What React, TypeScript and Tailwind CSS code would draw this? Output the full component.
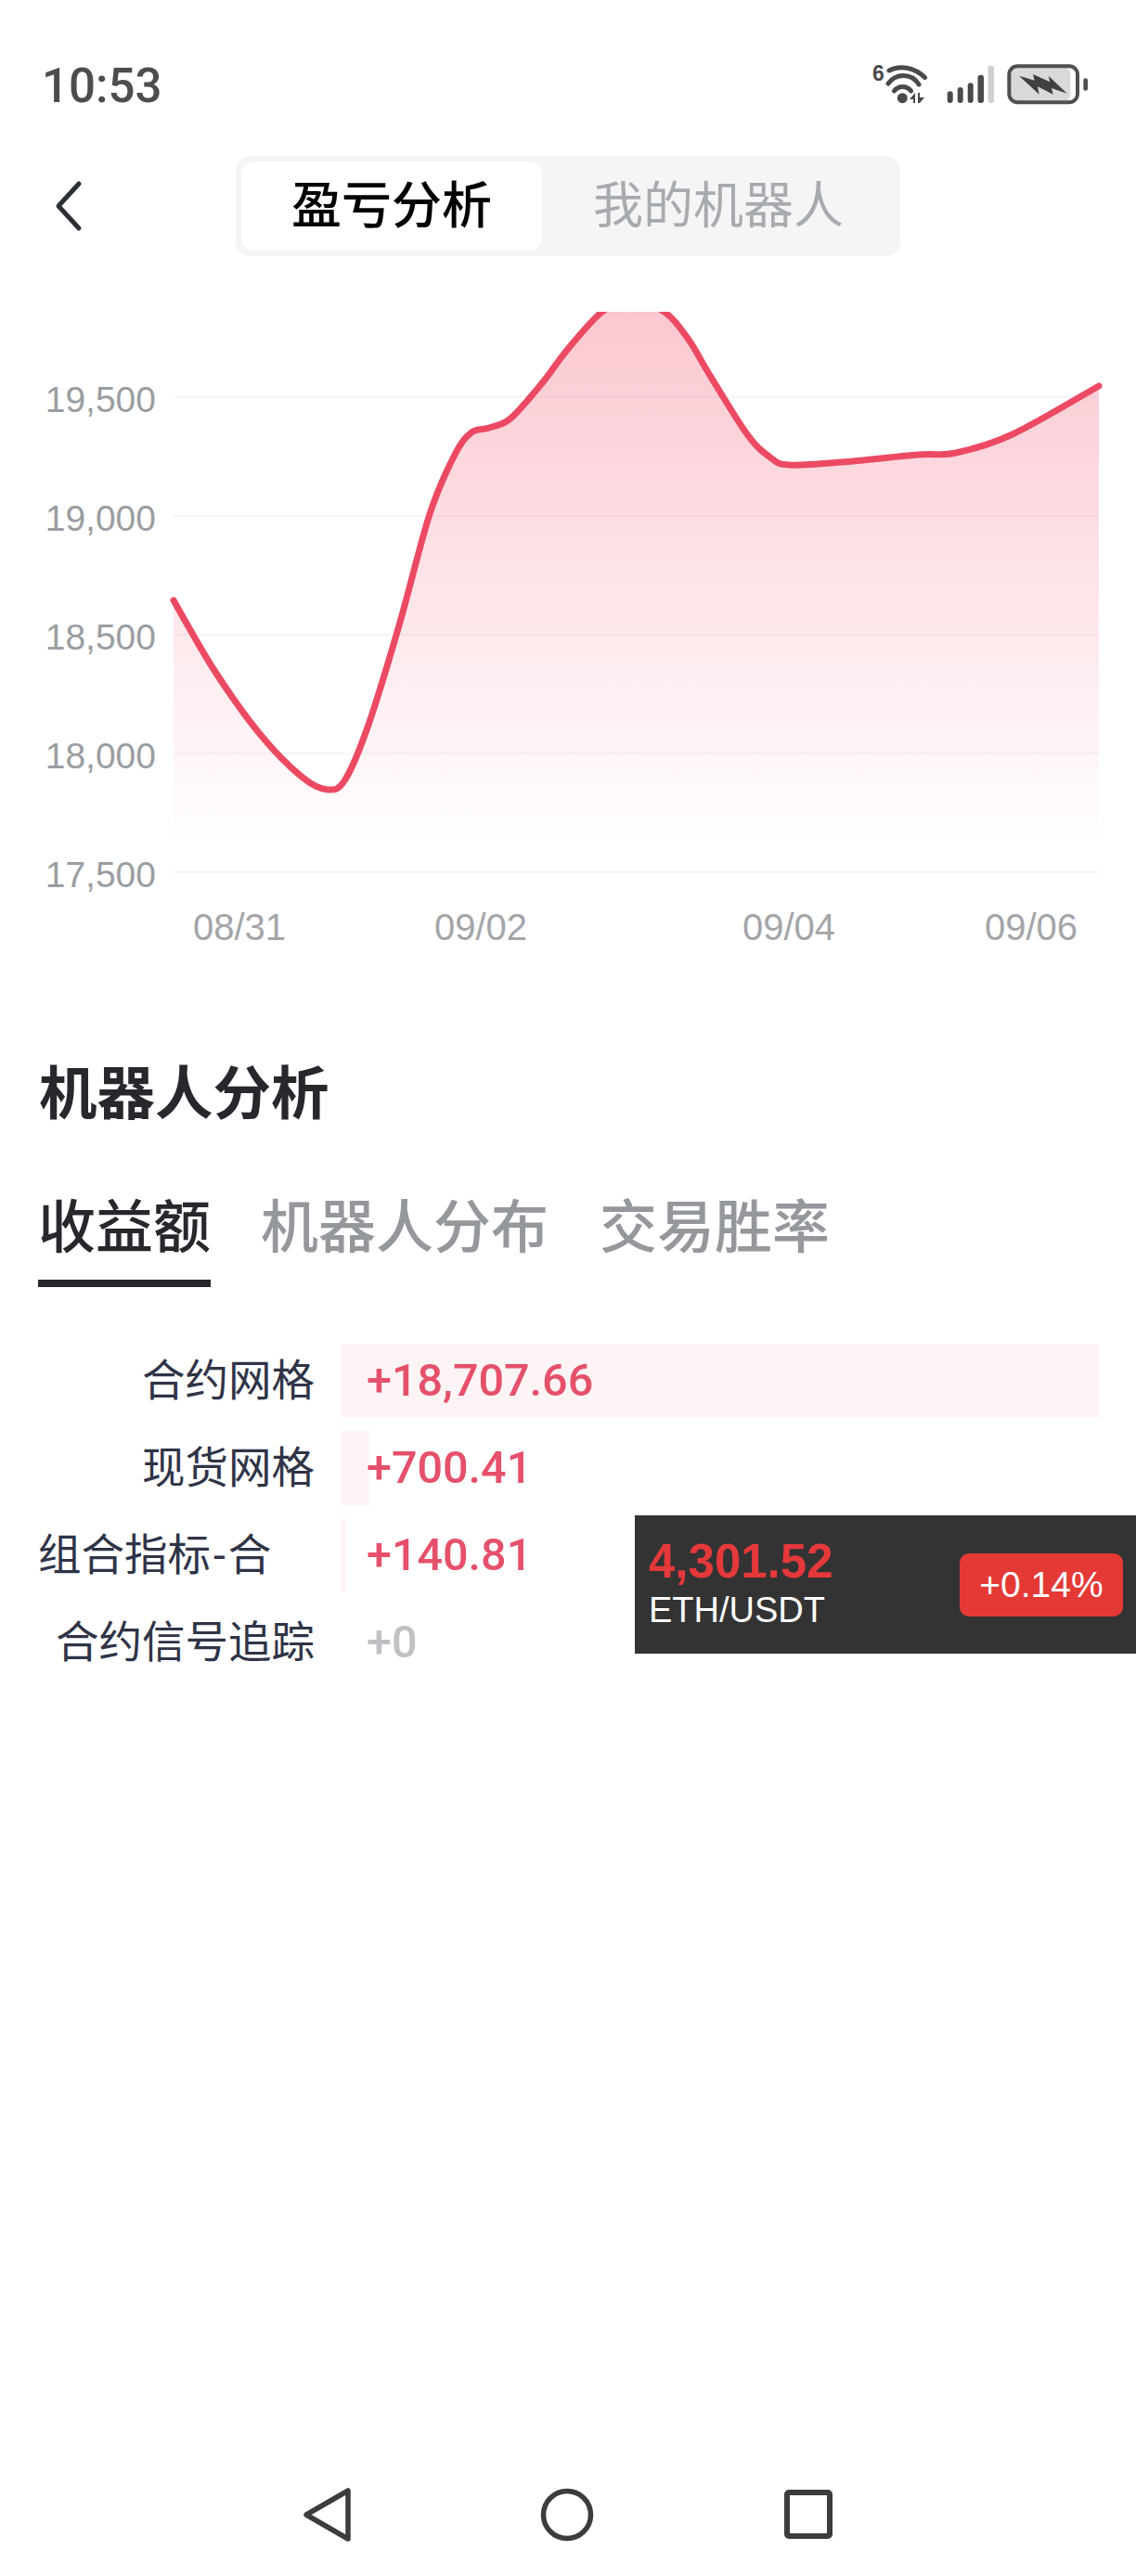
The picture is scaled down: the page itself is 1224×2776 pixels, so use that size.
import type { ReactNode } from "react";

const latin = "font-['Roboto','Noto_Sans_CJK_SC',sans-serif]";

const curve: [number, number][] = [
  [187, 647], [230, 721], [280, 791], [325, 837], [353, 851], [372, 840], [397, 781],
  [430, 674], [463, 554], [490, 490], [508, 466], [527, 461], [550, 451], [584, 413],
  [612, 376], [650, 335], [682, 324], [717, 337], [742, 366], [764, 403], [805, 468], [830, 493], [850, 501],
  [907, 498], [989, 490], [1030, 488], [1091, 468], [1184, 416],
];

// catmull-rom through the samples so the line stays smooth
function smoothPath(pts: [number, number][]) {
  let d = `M${pts[0][0]} ${pts[0][1]}`;
  for (let i = 0; i < pts.length - 1; i++) {
    const p0 = pts[Math.max(i - 1, 0)];
    const p1 = pts[i];
    const p2 = pts[i + 1];
    const p3 = pts[Math.min(i + 2, pts.length - 1)];
    const c1x = p1[0] + (p2[0] - p0[0]) / 6;
    const c1y = p1[1] + (p2[1] - p0[1]) / 6;
    const c2x = p2[0] - (p3[0] - p1[0]) / 6;
    const c2y = p2[1] - (p3[1] - p1[1]) / 6;
    d += ` C${c1x} ${c1y} ${c2x} ${c2y} ${p2[0]} ${p2[1]}`;
  }
  return d;
}

const yTicks = [
  { label: "19,500", y: 428 },
  { label: "19,000", y: 556 },
  { label: "18,500", y: 684 },
  { label: "18,000", y: 812 },
  { label: "17,500", y: 940 },
];

const xTicks = [
  { label: "08/31", x: 208 },
  { label: "09/02", x: 468 },
  { label: "09/04", x: 800 },
  { label: "09/06", x: 1061 },
];

const rows: { name: ReactNode; key: string; value: string; width: number; zero: boolean; left: boolean }[] = [
  { key: "a", name: "合约网格", value: "+18,707.66", width: 816, zero: false, left: false },
  { key: "b", name: "现货网格", value: "+700.41", width: 30, zero: false, left: false },
  {
    key: "c",
    name: (
      <>
        组合指标<span className="mx-[3px]">-</span>合
      </>
    ),
    value: "+140.81",
    width: 5,
    zero: false,
    left: true,
  },
  { key: "d", name: "合约信号追踪", value: "+0", width: 0, zero: true, left: false },
];

function StatusIcons() {
  return (
    <div className="flex items-start">
      <svg width="60" height="48" viewBox="0 0 60 48" fill="none" stroke="#4a4a4a" strokeLinecap="round" strokeWidth="5">
        <text x="0" y="21" fontSize="23" fontWeight="700" fill="#4a4a4a" stroke="none" fontFamily="Liberation Sans">6</text>
        <path d="M18 10C29 4 45 6 56.5 17.5" />
        <path d="M17 24C25 13 42 12 50 25" />
        <path d="M23.5 32C28 26 37 26 41.5 32" />
        <circle cx="32.3" cy="39.7" r="5.5" fill="#4a4a4a" stroke="none" />
        <path d="M40 41L46 34V45H44V41Z" fill="#4a4a4a" stroke="none" />
        <path d="M49 34H51V39H56L51 45H49Z" fill="#4a4a4a" stroke="none" />
      </svg>
      <svg className="ml-[20px] mt-[4px]" width="52" height="42" viewBox="0 0 52 42">
        <rect x="0.7" y="28.3" width="6" height="12.7" rx="3" fill="#4a4a4a" />
        <rect x="11.7" y="24" width="6" height="17" rx="3" fill="#4a4a4a" />
        <rect x="22.7" y="19.3" width="6" height="21.7" rx="3" fill="#4a4a4a" />
        <rect x="33.5" y="10.7" width="6.5" height="30.3" rx="3" fill="#4a4a4a" />
        <rect x="44.5" y="0.7" width="6.5" height="40.3" rx="3" fill="#d0d0d0" />
      </svg>
      <svg className="ml-[12px] mt-[2px]" width="90" height="46" viewBox="0 0 90 46">
        <rect x="3.3" y="3.3" width="66" height="39" rx="8" fill="#d9d9d9" />
        <rect x="3.3" y="3.3" width="73.7" height="39" rx="9" fill="none" stroke="#4f4f4f" strokeWidth="4" />
        <rect x="83.3" y="16.3" width="4.7" height="13.4" rx="2.3" fill="#4f4f4f" />
        <path d="M14 13.7L30.7 18.7L29 12L47.3 20.3L45.7 13.7L65.7 32.7L49 27L50.7 33.7L34 25.3L35.7 33.7Z" fill="#404040" />
      </svg>
    </div>
  );
}

function ProfitChart() {
  const line = smoothPath(curve);
  return (
    <svg width="1224" height="694" viewBox="0 336 1224 694" className="block">
      <defs>
        <linearGradient id="profitFill" gradientUnits="userSpaceOnUse" x1="0" y1="336" x2="0" y2="915">
          <stop offset="0" stopColor="#f23a5a" stopOpacity="0.28" />
          <stop offset="1" stopColor="#f23a5a" stopOpacity="0" />
        </linearGradient>
      </defs>
      {yTicks.map((t) => (
        <g key={t.label}>
          <line x1="187" x2="1184" y1={t.y} y2={t.y} stroke="#f4f5f6" strokeWidth="2" />
          <text x="168" y={t.y + 16} textAnchor="end" fontSize="39" fill="#9a9da1" fontFamily="Liberation Sans">{t.label}</text>
        </g>
      ))}
      <path d={`${line} L1184 940 L187 940 Z`} fill="url(#profitFill)" />
      <path d={line} fill="none" stroke="#ec4a63" strokeWidth="7" strokeLinecap="round" />
      {xTicks.map((t) => (
        <text key={t.label} x={t.x} y="1013" fontSize="40" fill="#a3a5a9" fontFamily="Liberation Sans">{t.label}</text>
      ))}
    </svg>
  );
}

export default function App() {
  return (
    <div className={`relative flex h-[2776px] w-[1224px] flex-col overflow-hidden bg-white ${latin}`}>
      <div className="flex h-[168px] items-start justify-between pl-[45px] pr-[50px] pt-[66px]">
        <span className="mt-[1px] text-[51px] font-medium leading-[52px] text-[#4d4d4d]">10:53</span>
        <StatusIcons />
      </div>

      <div className="relative flex h-[108px] justify-center">
        <button className="absolute left-[56px] top-[26px]">
          <svg width="36" height="56" viewBox="0 0 36 56" fill="none" stroke="#2b2f36" strokeWidth="5" strokeLinecap="round" strokeLinejoin="round">
            <path d="M29 4L7 28L29 52" />
          </svg>
        </button>
        <div className="flex w-[716px] rounded-[16px] bg-[#f4f5f7] p-[6px]">
          <div className="flex h-[96px] w-[324px] items-center justify-center rounded-[14px] bg-white text-[54px] font-medium text-black">盈亏分析</div>
          <div className="flex h-[96px] flex-1 items-center justify-center text-[54px] text-[#a8abae]">我的机器人</div>
        </div>
      </div>

      <div className="mt-[60px]">
        <ProfitChart />
      </div>

      <div className="mt-[105px] pl-[42px] text-[62.5px] font-semibold leading-[90px] text-[#26282d]">机器人分析</div>

      <div className="mt-[54px] flex items-start gap-[54px] pl-[41px] text-[62px] font-medium leading-[90px] text-[#94979c]">
        <div className="flex w-[186px] flex-col items-center">
          <span className="text-[#26282d]">收益额</span>
          <span className="mt-[10px] h-[8px] w-full bg-[#26282d]" />
        </div>
        <span>机器人分布</span>
        <span className="ml-[1px]">交易胜率</span>
      </div>

      <div className="mt-[61px] flex flex-col gap-[14px]">
        {rows.map((r) => (
          <div key={r.key} className="flex h-[80px] items-center">
            <div className={`ml-[41px] w-[298px] text-[46.5px] leading-[60px] text-[#2f3447] ${r.left ? "text-left" : "text-right"}`}>{r.name}</div>
            <div className="relative ml-[29px] flex h-full w-[816px] items-center">
              <div className="absolute inset-y-0 left-0 bg-[#fef4f5]" style={{ width: r.width }} />
              <span className={`relative pl-[27px] text-[48.5px] font-medium ${r.zero ? "text-[#bfc1c4]" : "text-[#e5506a]"}`}>{r.value}</span>
            </div>
          </div>
        ))}
      </div>

      {/* floating price ticker */}
      <div className="absolute left-[684px] top-[1633px] flex h-[149px] w-[540px] items-center justify-between bg-[#333333] pl-[15px] pr-[14px]">
        <div className="flex flex-col font-['Liberation_Sans']">
          <span className="text-[51px] font-bold leading-[54px] text-[#e5383b]">4,301.52</span>
          <span className="text-[38px] leading-[50px] text-white">ETH/USDT</span>
        </div>
        <span className="flex h-[68px] w-[176px] items-center justify-center rounded-[10px] bg-[#e53935] pt-[2px] font-['Liberation_Sans'] text-[39px] text-white">+0.14%</span>
      </div>

      <div className="mt-auto flex h-[96px] items-start pb-[40px]">
        <div className="ml-[324px] flex items-center">
          <svg width="56" height="60" viewBox="0 0 56 60" fill="none" stroke="#3c3c3c" strokeWidth="5.5" strokeLinejoin="round">
            <path d="M6 30L51 4V56Z" />
          </svg>
          <svg className="ml-[202px]" width="58" height="58" viewBox="0 0 58 58" fill="none" stroke="#3c3c3c" strokeWidth="5.5">
            <circle cx="29" cy="29" r="25.5" />
          </svg>
          <svg className="ml-[205px]" width="54" height="54" viewBox="0 0 54 54" fill="none" stroke="#3c3c3c" strokeWidth="6" strokeLinejoin="round">
            <rect x="3" y="3" width="46" height="47" rx="2" />
          </svg>
        </div>
      </div>
    </div>
  );
}
